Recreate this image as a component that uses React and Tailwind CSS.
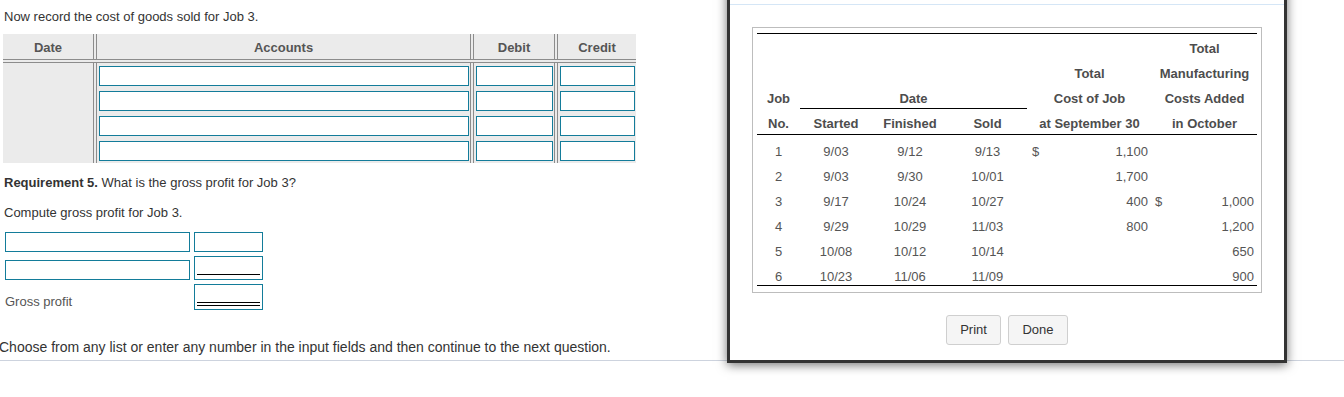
import React from "react";

const font = "font-['Liberation_Sans',Arial,sans-serif]";

function Sep() {
  return <div className="w-[4px] shrink-0 border-x border-[#8c8c8c]" />;
}

function Box({ className = "" }) {
  return <div className={`border border-[#137c9a] bg-white ${className}`} />;
}

function JournalRow() {
  return (
    <div className="flex h-[25px]">
      <div className="w-[90px] shrink-0" />
      <Sep />
      <div className="w-[373px] shrink-0 pt-[3px] pl-[2px]">
        <Box className="h-[20px] w-[370px]" />
      </div>
      <Sep />
      <div className="w-[80px] shrink-0 pt-[3px] pl-[2px]">
        <Box className="h-[20px] w-[77px]" />
      </div>
      <Sep />
      <div className="w-[78px] shrink-0 pt-[3px] pl-[2px]">
        <Box className="h-[20px] w-[75px]" />
      </div>
    </div>
  );
}

const cols = "grid grid-cols-[43px_72px_76px_79px_18px_107px_18px_87px]";

const jobs = [
  ["1", "9/03", "9/12", "9/13", "$", "1,100", "", ""],
  ["2", "9/03", "9/30", "10/01", "", "1,700", "", ""],
  ["3", "9/17", "10/24", "10/27", "", "400", "$", "1,000"],
  ["4", "9/29", "10/29", "11/03", "", "800", "", "1,200"],
  ["5", "10/08", "10/12", "10/14", "", "", "", "650"],
  ["6", "10/23", "11/06", "11/09", "", "", "", "900"],
];

function HCell({ children, className = "" }) {
  return (
    <div className={`h-[25px] pt-[8px] leading-[14px] text-center font-bold text-[#4d4d4d] ${className}`}>
      {children}
    </div>
  );
}

export default function App() {
  return (
    <div className={`relative h-[397px] w-[1344px] overflow-hidden bg-white text-[#333] ${font}`}>
      {/* Left question content */}
      <div className="pt-[9px] text-[13px] leading-4">
        <p className="pl-[4px]">Now record the cost of goods sold for Job 3.</p>

        <div className="ml-[3px] mt-[9px] w-[633px] bg-[#ebebeb]">
          <div className="flex h-[25px] font-bold text-[#555]">
            <div className="w-[90px] shrink-0 pt-[6px] text-center">Date</div>
            <Sep />
            <div className="w-[373px] shrink-0 pt-[6px] text-center">Accounts</div>
            <Sep />
            <div className="w-[80px] shrink-0 pt-[6px] text-center">Debit</div>
            <Sep />
            <div className="w-[78px] shrink-0 pt-[6px] text-center">Credit</div>
          </div>
          <div className="flex h-[4px]">
            <div className="w-[90px] shrink-0 border-y border-[#8c8c8c]" />
            <div className="w-[4px] shrink-0 border-y border-[#8c8c8c]" />
            <div className="w-[373px] shrink-0 border-y border-[#8c8c8c]" />
            <div className="w-[4px] shrink-0 border-y border-[#8c8c8c]" />
            <div className="w-[80px] shrink-0 border-y border-[#8c8c8c]" />
            <div className="w-[4px] shrink-0 border-y border-[#8c8c8c]" />
            <div className="w-[78px] shrink-0 border-y border-[#8c8c8c]" />
          </div>
          <JournalRow />
          <JournalRow />
          <JournalRow />
          <JournalRow />
        </div>

        <p className="mt-[12px] pl-[4px]">
          <span className="font-bold">Requirement 5.</span> What is the gross profit for Job 3?
        </p>
        <p className="mt-[14px] pl-[4px]">Compute gross profit for Job 3.</p>

        <div className="mt-[11px] flex gap-[4px] pl-[5px]">
          <Box className="h-[20px] w-[185px]" />
          <Box className="h-[20px] w-[69px]" />
        </div>
        <div className="mt-[4px] flex items-end gap-[4px] pl-[5px]">
          <Box className="h-[20px] w-[185px]" />
          <div className="flex h-[24px] w-[69px] flex-col justify-end border border-[#137c9a] bg-white px-[2px] pb-[4px]">
            <div className="h-px bg-black" />
          </div>
        </div>
        <div className="mt-[4px] flex items-end gap-[4px] pl-[5px]">
          <div className="w-[185px] text-[#555]">Gross profit</div>
          <div className="flex h-[26px] w-[69px] flex-col justify-end border border-[#137c9a] bg-white px-[2px] pb-[3px]">
            <div className="h-[4px] border-y border-black" />
          </div>
        </div>

        <p className="ml-[-1px] mt-[29px] text-[14px]">
          Choose from any list or enter any number in the input fields and then continue to the next question.
        </p>
        <div className="mt-[5px] h-px w-full bg-[#cdd3de]" />
      </div>

      {/* Modal window */}
      <div className="absolute left-[727px] top-[-38px] w-[560px] border-[3px] border-[#333] bg-white shadow-[0_2px_10px_rgba(0,0,0,0.55)]">
        <div className="h-[40px] border-b border-[#d5e6f6]" />
        <div className="px-[22px] pt-[22px] pb-[15px]">
          <div className="border border-[#bdbdbd] px-[4px] pt-[5px] pb-[6px] text-[13px] text-[#555]">
            <div className="border-y border-black">
              <div className={cols}>
                <HCell className="col-span-6" />
                <HCell className="col-span-2">Total</HCell>

                <HCell className="col-span-4" />
                <HCell className="col-span-2">Total</HCell>
                <HCell className="col-span-2">Manufacturing</HCell>

                <HCell>Job</HCell>
                <HCell className="col-span-3 border-b border-black">Date</HCell>
                <HCell className="col-span-2">Cost of Job</HCell>
                <HCell className="col-span-2">Costs Added</HCell>

                <HCell>No.</HCell>
                <HCell>Started</HCell>
                <HCell>Finished</HCell>
                <HCell>Sold</HCell>
                <HCell className="col-span-2">at September 30</HCell>
                <HCell className="col-span-2">in October</HCell>
              </div>
              <div className="border-t border-black">
                {jobs.map((r) => (
                  <div key={r[0]} className={`${cols} h-[25px] pt-[10px] leading-[14px]`}>
                    <div className="text-center">{r[0]}</div>
                    <div className="text-center">{r[1]}</div>
                    <div className="text-center">{r[2]}</div>
                    <div className="text-center">{r[3]}</div>
                    <div className="pl-[5px]">{r[4]}</div>
                    <div className="pr-[4px] text-right">{r[5]}</div>
                    <div className="pl-[3px]">{r[6]}</div>
                    <div className="pr-[3px] text-right">{r[7]}</div>
                  </div>
                ))}
              </div>
            </div>
          </div>
          <div className="mt-[22px] flex justify-center gap-[7px] text-[13px] text-[#333]">
            <button className="h-[30px] w-[55px] rounded-[3px] border border-[#cfcfcf] bg-[#f5f5f5]">Print</button>
            <button className="h-[30px] w-[60px] rounded-[3px] border border-[#cfcfcf] bg-[#f5f5f5]">Done</button>
          </div>
        </div>
      </div>
    </div>
  );
}
